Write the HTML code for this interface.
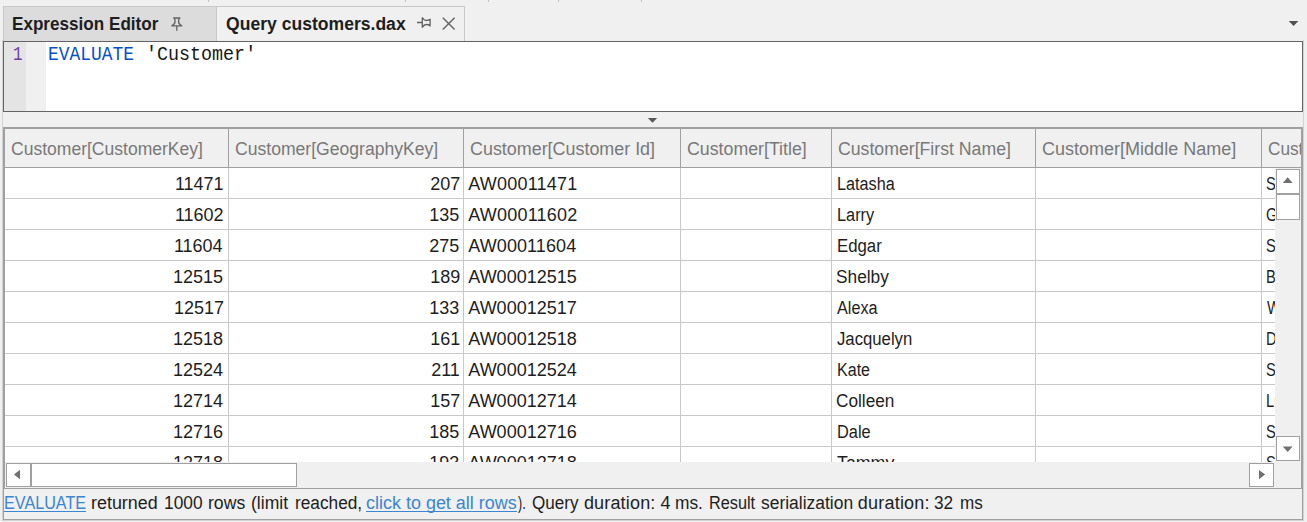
<!DOCTYPE html>
<html>
<head>
<meta charset="utf-8">
<title>Query customers.dax</title>
<style>
html,body{margin:0;padding:0;}
body{width:1307px;height:522px;overflow:hidden;background:#f0f0f0;font-family:"Liberation Sans",sans-serif;position:relative;}
.abs{position:absolute;}
.tick{position:absolute;top:0;width:1px;height:2px;background:#c0c0c0;}
.tab{position:absolute;top:6px;height:35px;box-sizing:border-box;}
#editor{position:absolute;left:3px;top:41px;width:1300px;height:71px;box-sizing:border-box;border:1px solid #646464;background:#fff;overflow:hidden;}
#outer{position:absolute;left:3px;top:127px;width:1300px;height:393px;box-sizing:border-box;border:1px solid #a0a0a0;}
#inner{position:absolute;left:4px;top:128px;width:1298px;height:361px;box-sizing:border-box;border:1px solid #a0a0a0;}
.faint{position:absolute;background:#d2d2d2;}
.vline{position:absolute;width:1px;}
.hline{position:absolute;height:1px;left:5px;}
.sbtn{position:absolute;box-sizing:border-box;border:1px solid #a0a0a0;background:#fff;}
.t{position:absolute;white-space:pre;}
.clip{position:absolute;overflow:hidden;}
.ul{position:absolute;height:1px;background:#3b86cf;}
.tabt{font:bold 18px "Liberation Sans",sans-serif;line-height:24px;color:#1e1e1e;}
.hdr{font:normal 18px "Liberation Sans",sans-serif;line-height:24px;color:#787878;}
.cell{font:normal 18px "Liberation Sans",sans-serif;line-height:24px;color:#1e1e1e;}
.st{font:normal 18px "Liberation Sans",sans-serif;line-height:24px;color:#1e1e1e;}
.stl{font:normal 18px "Liberation Sans",sans-serif;line-height:24px;color:#3b86cf;}
.ln{font:normal 18.4px "Liberation Mono",monospace;line-height:24px;color:#6a3fa0;}
.kw{font:normal 18.4px "Liberation Mono",monospace;line-height:24px;color:#0451c8;}
.code{font:normal 18.4px "Liberation Mono",monospace;line-height:24px;color:#161616;}

</style>
</head>
<body>
<!-- top ticks -->
<div class="tick" style="left:208px"></div>
<div class="tick" style="left:405px"></div>
<div class="tick" style="left:488px"></div>
<div class="tick" style="left:558px"></div>
<div class="tick" style="left:641px"></div>

<!-- tabs -->
<div class="tab" style="left:3px;width:214px;background:#dcdcdc;border:1px solid #c8c8c8;border-bottom:none;"></div>
<div class="tab" style="left:217px;width:248px;background:#f0f0f0;border-top:1px solid #c8c8c8;border-right:1px solid #c8c8c8;"></div>

<!-- pin icon vertical (tab1) -->
<svg class="abs" style="left:168px;top:14px" width="18" height="20" viewBox="0 0 18 20">
<path d="M5.2 4 H12.4 M6.3 4 C8 7.4 7.6 9.8 3.8 11.8 H13.8 C10 9.8 9.6 7.4 11.3 4 M8.8 11.8 V16.8" stroke="#626262" stroke-width="1.3" fill="none" stroke-linejoin="round"/>
</svg>
<!-- pin icon horizontal (tab2) -->
<svg class="abs" style="left:416px;top:14px" width="18" height="18" viewBox="0 0 18 18">
<path d="M1 8.5 H6.3 M6.3 3.2 V13.8 M6.3 3.6 C7.6 5.6 8.6 6.5 10 6.5 C11.5 6.5 13 6.2 14 5.2 M6.3 13.4 C7.6 11.4 8.6 10.5 10 10.5 C11.5 10.5 13 10.8 14 11.8 M14.1 4.8 V12.4" stroke="#626262" stroke-width="1.3" fill="none" stroke-linejoin="round"/>
</svg>
<!-- close X -->
<svg class="abs" style="left:441px;top:16px" width="16" height="16" viewBox="0 0 16 16">
<path d="M1.8 1.8 L13.6 13.6 M13.6 1.8 L1.8 13.6" stroke="#666666" stroke-width="1.45" fill="none"/>
</svg>
<!-- dropdown triangle -->
<svg class="abs" style="left:1286px;top:18px" width="16" height="10" viewBox="0 0 16 10"><path d="M2.7 3.0 H12.4 L7.55 7.9 Z" fill="#505050"/></svg>

<!-- editor -->
<div id="editor">
  <div class="abs" style="left:0;top:0;width:22px;height:69px;background:#e4e4e4;"></div>
  <div class="abs" style="left:22px;top:0;width:20px;height:69px;background:#f0f0f0;"></div>
</div>

<!-- splitter triangle -->
<svg class="abs" style="left:645px;top:115px" width="16" height="10" viewBox="0 0 16 10"><path d="M2.8 2.9 H12.2 L7.5 7.8 Z" fill="#585858"/></svg>

<!-- outer grid border -->
<div class="faint" style="left:2px;top:40px;width:1px;height:481px"></div>
<div class="faint" style="left:1303px;top:40px;width:1px;height:481px"></div>
<div class="faint" style="left:2px;top:520px;width:1302px;height:1px"></div>
<div id="outer"></div>
<div id="inner"></div>

<!-- grid body background -->
<div class="abs" style="left:5px;top:168px;width:1270px;height:294px;background:#fff;"></div>

<div id="gridlines">
<div class="vline" style="left:228px;top:129px;height:38px;background:#a0a0a0"></div>
<div class="vline" style="left:228px;top:168px;height:294px;background:#c8c8c8"></div>
<div class="vline" style="left:463px;top:129px;height:38px;background:#a0a0a0"></div>
<div class="vline" style="left:463px;top:168px;height:294px;background:#c8c8c8"></div>
<div class="vline" style="left:680px;top:129px;height:38px;background:#a0a0a0"></div>
<div class="vline" style="left:680px;top:168px;height:294px;background:#c8c8c8"></div>
<div class="vline" style="left:831px;top:129px;height:38px;background:#a0a0a0"></div>
<div class="vline" style="left:831px;top:168px;height:294px;background:#c8c8c8"></div>
<div class="vline" style="left:1035px;top:129px;height:38px;background:#a0a0a0"></div>
<div class="vline" style="left:1035px;top:168px;height:294px;background:#c8c8c8"></div>
<div class="vline" style="left:1261px;top:129px;height:38px;background:#a0a0a0"></div>
<div class="vline" style="left:1261px;top:168px;height:294px;background:#c8c8c8"></div>
<div class="hline" style="top:167px;width:1296px;background:#a0a0a0"></div>
<div class="hline" style="top:198px;width:1270px;background:#c8c8c8"></div>
<div class="hline" style="top:229px;width:1270px;background:#c8c8c8"></div>
<div class="hline" style="top:260px;width:1270px;background:#c8c8c8"></div>
<div class="hline" style="top:291px;width:1270px;background:#c8c8c8"></div>
<div class="hline" style="top:322px;width:1270px;background:#c8c8c8"></div>
<div class="hline" style="top:353px;width:1270px;background:#c8c8c8"></div>
<div class="hline" style="top:384px;width:1270px;background:#c8c8c8"></div>
<div class="hline" style="top:415px;width:1270px;background:#c8c8c8"></div>
<div class="hline" style="top:446px;width:1270px;background:#c8c8c8"></div>
</div>

<!-- vertical scrollbar -->
<div class="abs" style="left:1275px;top:168px;width:26px;height:294px;background:#f0f0f0;"></div>
<div class="sbtn" style="left:1276px;top:169px;width:24px;height:25px;"></div>
<div class="sbtn" style="left:1276px;top:194px;width:24px;height:26px;"></div>
<div class="sbtn" style="left:1276px;top:436px;width:24px;height:25px;"></div>
<svg class="abs" style="left:1282px;top:176px" width="12" height="8" viewBox="0 0 12 8"><path d="M0.8 6.9 H10.6 L5.7 1.3 Z" fill="#707070"/></svg>
<svg class="abs" style="left:1282px;top:445px" width="12" height="8" viewBox="0 0 12 8"><path d="M0.8 1.5 H10.6 L5.7 7.1 Z" fill="#707070"/></svg>

<!-- horizontal scrollbar -->
<div class="abs" style="left:5px;top:462px;width:1296px;height:26px;background:#f0f0f0;"></div>
<div class="sbtn" style="left:6px;top:463px;width:25px;height:24px;"></div>
<div class="sbtn" style="left:31px;top:463px;width:266px;height:24px;"></div>
<div class="sbtn" style="left:1249px;top:463px;width:25px;height:24px;"></div>
<svg class="abs" style="left:13px;top:469px" width="8" height="12" viewBox="0 0 8 12"><path d="M7 0.8 V10.2 L0.9 5.5 Z" fill="#707070"/></svg>
<svg class="abs" style="left:1258px;top:469px" width="8" height="12" viewBox="0 0 8 12"><path d="M1 0.9 V10.3 L7.1 5.6 Z" fill="#707070"/></svg>

<!-- status separator -->


<div id="texts">
<div class="t tabt" style="left:12.45px;top:12px;transform:scale(0.9503,1.0);transform-origin:0 18px;">Expression Editor</div>
<div class="t tabt" style="left:226.42px;top:12px;transform:scale(0.9760,1.0);transform-origin:0 18px;">Query customers.dax</div>
<div class="t hdr" style="left:11.23px;top:137px;transform:scale(0.9738,1.0);transform-origin:0 18px;">Customer[CustomerKey]</div>
<div class="t hdr" style="left:235.22px;top:137px;transform:scale(0.9767,1.0);transform-origin:0 18px;">Customer[GeographyKey]</div>
<div class="t hdr" style="left:470.01px;top:137px;transform:scale(0.9946,1.0);transform-origin:0 18px;">Customer[Customer Id]</div>
<div class="t hdr" style="left:687.21px;top:137px;transform:scale(0.9866,1.0);transform-origin:0 18px;">Customer[Title]</div>
<div class="t hdr" style="left:837.72px;top:137px;transform:scale(0.9822,1.0);transform-origin:0 18px;">Customer[First Name]</div>
<div class="t hdr" style="left:1042.10px;top:137px;">Customer[Middle Name]</div>
<div class="clip" style="left:1262px;top:129px;width:39px;height:38px"><div class="t hdr" style="left:6.45px;top:8px;transform:scale(0.9549,1.0);transform-origin:0 18px;">Customer[Last Name]</div></div>
<div class="t stl" style="left:4.10px;top:491px;transform:scale(0.8989,1.0);transform-origin:0 18px;">EVALUATE</div><div class="ul" style="left:4.0px;top:511px;width:82.1px"></div>
<div class="t st" style="left:90.90px;top:491px;transform:scale(0.9954,1.0);transform-origin:0 18px;">returned</div>
<div class="t st" style="left:163.54px;top:491px;transform:scale(0.9615,1.0);transform-origin:0 18px;">1000</div>
<div class="t st" style="left:207.82px;top:491px;transform:scale(0.9784,1.0);transform-origin:0 18px;">rows</div>
<div class="t st" style="left:251.42px;top:491px;transform:scale(0.9757,1.0);transform-origin:0 18px;">(limit</div>
<div class="t st" style="left:294.54px;top:491px;transform:scale(0.9588,1.0);transform-origin:0 18px;">reached,</div>
<div class="t stl" style="left:365.80px;top:491px;transform:scale(0.9980,1.0);transform-origin:0 18px;">click to get all rows</div><div class="ul" style="left:365.8px;top:511px;width:150.9px"></div>
<div class="t st" style="left:518.00px;top:491px;transform:scale(0.7000,1.0);transform-origin:0 18px;">).</div>
<div class="t st" style="left:531.55px;top:491px;transform:scale(0.9479,1.0);transform-origin:0 18px;">Query</div>
<div class="t st" style="left:583.90px;top:491px;letter-spacing:0.175px;">duration:</div>
<div class="t st" style="left:660.50px;top:491px;letter-spacing:0.300px;">4</div>
<div class="t st" style="left:675.34px;top:491px;transform:scale(0.9630,1.0);transform-origin:0 18px;">ms.</div>
<div class="t st" style="left:708.90px;top:491px;transform:scale(0.9040,1.0);transform-origin:0 18px;">Result</div>
<div class="t st" style="left:760.93px;top:491px;transform:scale(0.9688,1.0);transform-origin:0 18px;">serialization</div>
<div class="t st" style="left:857.80px;top:491px;letter-spacing:0.213px;">duration:</div>
<div class="t st" style="left:934.34px;top:491px;transform:scale(0.9556,1.0);transform-origin:0 18px;">32</div>
<div class="t st" style="left:959.55px;top:491px;transform:scale(0.9478,1.0);transform-origin:0 18px;">ms</div>
<div class="t ln" style="left:12.54px;top:44px;transform:scale(0.8600,1.09);transform-origin:0 16px;">1</div>
<div class="t kw" style="left:48.23px;top:44px;transform:scale(0.9736,1.09);transform-origin:0 16px;">EVALUATE</div>
<div class="t code" style="left:146.31px;top:44px;transform:scale(0.9980,1.09);transform-origin:0 16px;">'Customer'</div>
<div class="clip" style="left:5px;top:168px;width:1270px;height:31px"><div class="t cell" style="left:169.90px;top:4px;">11471</div></div>
<div class="clip" style="left:5px;top:168px;width:1270px;height:31px"><div class="t cell" style="left:425.20px;top:4px;">207</div></div>
<div class="clip" style="left:5px;top:168px;width:1270px;height:31px"><div class="t cell" style="left:463.30px;top:4px;letter-spacing:0.200px;">AW00011471</div></div>
<div class="clip" style="left:5px;top:168px;width:1270px;height:31px"><div class="t cell" style="left:831.60px;top:4px;transform:scale(0.9000,1.0);transform-origin:0 18px;">Latasha</div></div>
<div class="clip" style="left:1262px;top:168px;width:13px;height:31px"><div class="t cell" style="left:4.38px;top:4px;transform:scale(0.8200,1.0);transform-origin:0 18px;">Suarez</div></div>
<div class="clip" style="left:5px;top:199px;width:1270px;height:31px"><div class="t cell" style="left:169.90px;top:4px;">11602</div></div>
<div class="clip" style="left:5px;top:199px;width:1270px;height:31px"><div class="t cell" style="left:424.20px;top:4px;">135</div></div>
<div class="clip" style="left:5px;top:199px;width:1270px;height:31px"><div class="t cell" style="left:463.30px;top:4px;letter-spacing:0.200px;">AW00011602</div></div>
<div class="clip" style="left:5px;top:199px;width:1270px;height:31px"><div class="t cell" style="left:831.59px;top:4px;transform:scale(0.9075,1.0);transform-origin:0 18px;">Larry</div></div>
<div class="clip" style="left:1262px;top:199px;width:13px;height:31px"><div class="t cell" style="left:4.38px;top:4px;transform:scale(0.8200,1.0);transform-origin:0 18px;">Gill</div></div>
<div class="clip" style="left:5px;top:230px;width:1270px;height:31px"><div class="t cell" style="left:168.90px;top:4px;">11604</div></div>
<div class="clip" style="left:5px;top:230px;width:1270px;height:31px"><div class="t cell" style="left:424.20px;top:4px;">275</div></div>
<div class="clip" style="left:5px;top:230px;width:1270px;height:31px"><div class="t cell" style="left:463.30px;top:4px;letter-spacing:0.089px;">AW00011604</div></div>
<div class="clip" style="left:5px;top:230px;width:1270px;height:31px"><div class="t cell" style="left:831.57px;top:4px;transform:scale(0.9319,1.0);transform-origin:0 18px;">Edgar</div></div>
<div class="clip" style="left:1262px;top:230px;width:13px;height:31px"><div class="t cell" style="left:4.38px;top:4px;transform:scale(0.8200,1.0);transform-origin:0 18px;">Sara</div></div>
<div class="clip" style="left:5px;top:261px;width:1270px;height:31px"><div class="t cell" style="left:167.90px;top:4px;">12515</div></div>
<div class="clip" style="left:5px;top:261px;width:1270px;height:31px"><div class="t cell" style="left:425.20px;top:4px;">189</div></div>
<div class="clip" style="left:5px;top:261px;width:1270px;height:31px"><div class="t cell" style="left:463.30px;top:4px;">AW00012515</div></div>
<div class="clip" style="left:5px;top:261px;width:1270px;height:31px"><div class="t cell" style="left:830.94px;top:4px;transform:scale(0.9611,1.0);transform-origin:0 18px;">Shelby</div></div>
<div class="clip" style="left:1262px;top:261px;width:13px;height:31px"><div class="t cell" style="left:4.38px;top:4px;transform:scale(0.8200,1.0);transform-origin:0 18px;">Bailey</div></div>
<div class="clip" style="left:5px;top:292px;width:1270px;height:31px"><div class="t cell" style="left:168.90px;top:4px;">12517</div></div>
<div class="clip" style="left:5px;top:292px;width:1270px;height:31px"><div class="t cell" style="left:424.20px;top:4px;">133</div></div>
<div class="clip" style="left:5px;top:292px;width:1270px;height:31px"><div class="t cell" style="left:463.30px;top:4px;">AW00012517</div></div>
<div class="clip" style="left:5px;top:292px;width:1270px;height:31px"><div class="t cell" style="left:831.90px;top:4px;transform:scale(0.9000,1.0);transform-origin:0 18px;">Alexa</div></div>
<div class="clip" style="left:1262px;top:292px;width:13px;height:31px"><div class="t cell" style="left:5.20px;top:4px;transform:scale(0.8200,1.0);transform-origin:0 18px;">Watson</div></div>
<div class="clip" style="left:5px;top:323px;width:1270px;height:31px"><div class="t cell" style="left:167.90px;top:4px;">12518</div></div>
<div class="clip" style="left:5px;top:323px;width:1270px;height:31px"><div class="t cell" style="left:425.20px;top:4px;">161</div></div>
<div class="clip" style="left:5px;top:323px;width:1270px;height:31px"><div class="t cell" style="left:463.30px;top:4px;">AW00012518</div></div>
<div class="clip" style="left:5px;top:323px;width:1270px;height:31px"><div class="t cell" style="left:831.90px;top:4px;transform:scale(0.9288,1.0);transform-origin:0 18px;">Jacquelyn</div></div>
<div class="clip" style="left:1262px;top:323px;width:13px;height:31px"><div class="t cell" style="left:4.38px;top:4px;transform:scale(0.8200,1.0);transform-origin:0 18px;">Dominguez</div></div>
<div class="clip" style="left:5px;top:354px;width:1270px;height:31px"><div class="t cell" style="left:167.90px;top:4px;">12524</div></div>
<div class="clip" style="left:5px;top:354px;width:1270px;height:31px"><div class="t cell" style="left:426.20px;top:4px;">211</div></div>
<div class="clip" style="left:5px;top:354px;width:1270px;height:31px"><div class="t cell" style="left:463.30px;top:4px;">AW00012524</div></div>
<div class="clip" style="left:5px;top:354px;width:1270px;height:31px"><div class="t cell" style="left:831.61px;top:4px;transform:scale(0.8917,1.0);transform-origin:0 18px;">Kate</div></div>
<div class="clip" style="left:1262px;top:354px;width:13px;height:31px"><div class="t cell" style="left:4.38px;top:4px;transform:scale(0.8200,1.0);transform-origin:0 18px;">Shan</div></div>
<div class="clip" style="left:5px;top:385px;width:1270px;height:31px"><div class="t cell" style="left:167.90px;top:4px;">12714</div></div>
<div class="clip" style="left:5px;top:385px;width:1270px;height:31px"><div class="t cell" style="left:425.20px;top:4px;">157</div></div>
<div class="clip" style="left:5px;top:385px;width:1270px;height:31px"><div class="t cell" style="left:463.30px;top:4px;">AW00012714</div></div>
<div class="clip" style="left:5px;top:385px;width:1270px;height:31px"><div class="t cell" style="left:830.94px;top:4px;transform:scale(0.9559,1.0);transform-origin:0 18px;">Colleen</div></div>
<div class="clip" style="left:1262px;top:385px;width:13px;height:31px"><div class="t cell" style="left:4.38px;top:4px;transform:scale(0.8200,1.0);transform-origin:0 18px;">Lu</div></div>
<div class="clip" style="left:5px;top:416px;width:1270px;height:31px"><div class="t cell" style="left:167.90px;top:4px;">12716</div></div>
<div class="clip" style="left:5px;top:416px;width:1270px;height:31px"><div class="t cell" style="left:424.20px;top:4px;">185</div></div>
<div class="clip" style="left:5px;top:416px;width:1270px;height:31px"><div class="t cell" style="left:463.30px;top:4px;">AW00012716</div></div>
<div class="clip" style="left:5px;top:416px;width:1270px;height:31px"><div class="t cell" style="left:831.59px;top:4px;transform:scale(0.9083,1.0);transform-origin:0 18px;">Dale</div></div>
<div class="clip" style="left:1262px;top:416px;width:13px;height:31px"><div class="t cell" style="left:4.38px;top:4px;transform:scale(0.8200,1.0);transform-origin:0 18px;">Shen</div></div>
<div class="clip" style="left:5px;top:447px;width:1270px;height:15px"><div class="t cell" style="left:167.90px;top:4px;">12718</div></div>
<div class="clip" style="left:5px;top:447px;width:1270px;height:15px"><div class="t cell" style="left:424.20px;top:4px;">193</div></div>
<div class="clip" style="left:5px;top:447px;width:1270px;height:15px"><div class="t cell" style="left:463.30px;top:4px;">AW00012718</div></div>
<div class="clip" style="left:5px;top:447px;width:1270px;height:15px"><div class="t cell" style="left:831.90px;top:4px;transform:scale(0.9879,1.0);transform-origin:0 18px;">Tammy</div></div>
<div class="clip" style="left:1262px;top:447px;width:13px;height:15px"><div class="t cell" style="left:4.38px;top:4px;transform:scale(0.8200,1.0);transform-origin:0 18px;">Sai</div></div>
</div>
</body>
</html>
